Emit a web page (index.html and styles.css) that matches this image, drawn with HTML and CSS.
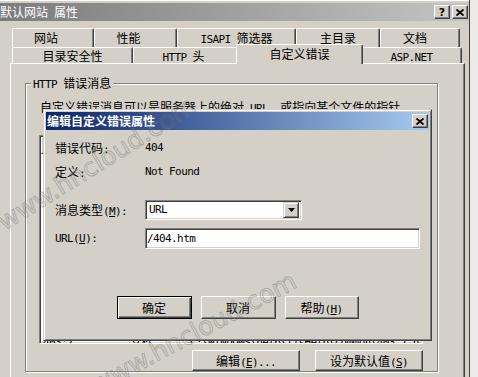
FILE: index.html
```html
<!DOCTYPE html>
<html lang="zh-CN">
    <head>
        <meta charset="UTF-8" />
        <title>默认网站 属性</title>
        <link rel="stylesheet" href="styles.css">
    </head>
    <body>
        <div class="window">
            <div class="titlebar">
                <span class="title">默认网站<span class="en"> </span>属性</span>
                <div class="caption_btns">
                    <span class="cbtn">?</span>
                    <span class="cbtn">
                        <svg width="8" height="7" viewBox="0 0 8 7"><path d="M0.5 0.5 L7.5 6.5 M7.5 0.5 L0.5 6.5" stroke="#000" stroke-width="1.8"/></svg>
                    </span>
                </div>
            </div>

            <div class="tabs">
                <div class="tab_row">
                    <div class="tab tab_site">网站</div>
                    <div class="tab tab_perf">性能</div>
                    <div class="tab tab_isapi"><span class="en">ISAPI </span>筛选器</div>
                    <div class="tab tab_home">主目录</div>
                    <div class="tab tab_docs">文档</div>
                </div>
                <div class="tab_row front">
                    <div class="tab tab_secure">目录安全性</div>
                    <div class="tab tab_headers"><span class="en">HTTP </span>头</div>
                    <div class="tab tab_errors active">自定义错误</div>
                    <div class="tab tab_aspnet"><span class="en">ASP.NET</span></div>
                </div>
            </div>

            <div class="panel">
                <fieldset class="group">
                    <legend><span class="en">HTTP </span>错误消息</legend>
                    <p class="desc">自定义错误消息可以是服务器上的绝对<span class="en"> URL, </span>或指向某个文件的指针。</p>
                    <div class="listview">
                        <div class="lv_head">
                            <span class="col_code"><span class="en">HTTP </span>错误</span>
                            <span class="col_type">类型</span>
                            <span class="col_path">内容</span>
                        </div>
                        <div class="lv_row"><span class="col_code en">400</span><span class="col_type">文件</span><span class="col_path en">C:\WINDOWS\help\iisHelp\common\400.htm</span></div>
                        <div class="lv_row"><span class="col_code en">401;1</span><span class="col_type">文件</span><span class="col_path en">C:\WINDOWS\help\iisHelp\common\401-1.htm</span></div>
                        <div class="lv_row"><span class="col_code en">401;2</span><span class="col_type">文件</span><span class="col_path en">C:\WINDOWS\help\iisHelp\common\401-2.htm</span></div>
                        <div class="lv_row"><span class="col_code en">401;3</span><span class="col_type">文件</span><span class="col_path en">C:\WINDOWS\help\iisHelp\common\401-3.htm</span></div>
                        <div class="lv_row"><span class="col_code en">401;4</span><span class="col_type">文件</span><span class="col_path en">C:\WINDOWS\help\iisHelp\common\401-4.htm</span></div>
                        <div class="lv_row"><span class="col_code en">401;5</span><span class="col_type">文件</span><span class="col_path en">C:\WINDOWS\help\iisHelp\common\401-5.htm</span></div>
                        <div class="lv_row"><span class="col_code en">401;7</span><span class="col_type">文件</span><span class="col_path en">C:\WINDOWS\help\iisHelp\common\401-1.htm</span></div>
                        <div class="lv_row"><span class="col_code en">403;1</span><span class="col_type">文件</span><span class="col_path en">C:\WINDOWS\help\iisHelp\common\403-1.htm</span></div>
                        <div class="lv_row"><span class="col_code en">403;2</span><span class="col_type">文件</span><span class="col_path en">C:\WINDOWS\help\iisHelp\common\403-2.htm</span></div>
                        <div class="lv_row"><span class="col_code en">403;3</span><span class="col_type">文件</span><span class="col_path en">C:\WINDOWS\help\iisHelp\common\403-3.htm</span></div>
                        <div class="lv_row"><span class="col_code en">403;4</span><span class="col_type">文件</span><span class="col_path en">C:\WINDOWS\help\iisHelp\common\403-4.htm</span></div>
                        <div class="lv_row"><span class="col_code en">403;5</span><span class="col_type">文件</span><span class="col_path en">C:\WINDOWS\help\iisHelp\common\403-5.htm</span></div>
                        <div class="lv_row"><span class="col_code en">403;6</span><span class="col_type">文件</span><span class="col_path en">C:\WINDOWS\help\iisHelp\common\403-6.htm</span></div>
                        <div class="lv_row"><span class="col_code en">403;7</span><span class="col_type">文件</span><span class="col_path en">C:\WINDOWS\help\iisHelp\common\403-7.htm</span></div>
                        <div class="lv_row"><span class="col_code en">403;8</span><span class="col_type">文件</span><span class="col_path en">C:\WINDOWS\help\iisHelp\common\403-8.htm</span></div>
                    </div>
                    <div class="group_btns">
                        <button>编辑<span class="en">(<u>E</u>)...</span></button>
                        <button>设为默认值<span class="en">(<u>S</u>)</span></button>
                    </div>
                </fieldset>
            </div>

            <!-- 编辑对话框 -->
            <div class="dialog">
                <div class="dlg_title">
                    <span>编辑自定义错误属性</span>
                    <span class="cbtn">
                        <svg width="8" height="7" viewBox="0 0 8 7"><path d="M0.5 0.5 L7.5 6.5 M7.5 0.5 L0.5 6.5" stroke="#000" stroke-width="1.8"/></svg>
                    </span>
                </div>
                <div class="dlg_body">
                    <div class="field f_code">
                        <span class="label">错误代码<span class="en">:</span></span>
                        <span class="en">404</span>
                    </div>
                    <div class="field f_def">
                        <span class="label">定义<span class="en">:</span></span>
                        <span class="en">Not Found</span>
                    </div>
                    <div class="field f_type">
                        <span class="label">消息类型<span class="en">(<u>M</u>):</span></span>
                        <div class="combo">
                            <span class="value en">URL</span>
                            <span class="drop">
                                <svg width="7" height="4" viewBox="0 0 7 4"><path d="M0 0 H7 L3.5 4 Z" fill="#000"/></svg>
                            </span>
                        </div>
                    </div>
                    <div class="field f_url">
                        <span class="label en">URL(<u>U</u>):</span>
                        <input class="textbox en" type="text" value="/404.htm" />
                    </div>
                    <div class="dlg_btns">
                        <button class="default">确定</button>
                        <button>取消</button>
                        <button class="help">帮助<span class="en">(<u>H</u>)</span></button>
                    </div>
                </div>
            </div>

            <div class="watermark wm_top">www.hncloud.com</div>
            <div class="watermark wm_bottom">www.hncloud.com</div>
        </div>
    </body>
</html>
```

FILE: styles.css
```css
* {
    box-sizing: border-box;
}

body {
    margin: 0;
    overflow: hidden;
    background: #eceae6;
    font-family: "Noto Sans CJK SC", sans-serif;
    font-size: 12px;
    line-height: 14px;
    color: #000;
}

/* latin text, narrow like the old bitmap font */
.en {
    font-family: "DejaVu Sans Mono", "Liberation Mono", monospace;
    font-size: 11px;
    line-height: 10px;
    letter-spacing: -0.6px;
}

.window {
    position: relative;
    width: 470px;
    height: 377px;
    overflow: hidden;
    padding-top: 3px;
    background: #d4d0c8;
    border-right: 1px solid #404040;
    box-shadow: inset 0 1px #fff;
}

.titlebar {
    display: flex;
    align-items: center;
    height: 18px;
    padding-right: 1px;
    background: linear-gradient(to right, #7c7c7c, #c4c4c4);
    color: #fff;
}

.titlebar .title {
    flex: 1;
    white-space: nowrap;
}

.caption_btns {
    display: flex;
    gap: 2px;
}

.cbtn {
    display: flex;
    align-items: center;
    justify-content: center;
    width: 16px;
    height: 14px;
    background: #d4d0c8;
    border: 1px solid;
    border-color: #fff #404040 #404040 #fff;
    box-shadow: inset -1px -1px #808080;
    color: #000;
    font: bold 11px "DejaVu Sans", sans-serif;
}

/* tabs */
.tabs {
    margin: 7px 0 0 12px;
}

.tab_row {
    display: flex;
}

.tab {
    height: 19px;
    padding-top: 2px;
    text-align: center;
    white-space: nowrap;
    background: #d4d0c8;
    border-top: 1px solid #fff;
    border-left: 1px solid #fff;
    border-right: 1px solid #404040;
    border-radius: 2px 2px 0 0;
    box-shadow: inset -1px 0 #808080;
}

.tab_row.front .tab {
    height: 16px;
    padding-top: 1px;
}

.tab_row.front .tab.active {
    position: relative;
    z-index: 1;
    height: 20px;
    margin: -3px -2px -1px;
    padding-top: 2px;
}

.tab_site { width: 82px; padding-right: 14px; }
.tab_perf { width: 83px; padding-right: 14px; }
.tab_isapi { width: 119px; }
.tab_home { width: 84px; }
.tab_docs { width: 80px; padding-right: 10px; }
.tab_secure { width: 121px; }
.tab_headers { width: 105px; padding-right: 4px; }
.tab_errors { width: 127px; }
.tab_aspnet { width: 101px; }

.panel {
    width: 455px;
    height: 330px;
    margin-left: 10px;
    padding-left: 14px;
    border-top: 1px solid #fff;
    border-left: 1px solid #fff;
    border-right: 1px solid #404040;
    box-shadow: inset -1px 0 #808080;
}

/* group box */
.group {
    width: 413px;
    min-width: 0;
    margin: 13px 0 0;
    padding: 0 14px 0 13px;
    border: 1px solid #808080;
    box-shadow: 1px 1px #fff, inset 1px 1px #fff;
}

.group legend {
    margin-left: -8px;
    padding: 0 2px;
    line-height: 12px;
    background: #d4d0c8;
}

.desc {
    height: 14px;
    margin: 10px 0 0 1px;
    white-space: nowrap;
}

.listview {
    height: 209px;
    margin-top: 21px;
    padding: 1px;
    overflow: hidden;
    background: #fff;
    border: 1px solid;
    border-color: #808080 #fff #fff #808080;
    box-shadow: inset 1px 1px #404040, inset -1px -1px #d4d0c8;
}

.lv_head {
    display: flex;
    height: 17px;
    background: #d4d0c8;
}

.lv_head span {
    padding: 1px 0 0 5px;
    border: 1px solid;
    border-color: #fff #404040 #404040 #fff;
}

.lv_row {
    display: flex;
    align-items: center;
    height: 14px;
    overflow: hidden;
    white-space: nowrap;
}

.col_code { flex: none; width: 89px; padding-left: 2px; }
.col_type { flex: none; width: 60px; }
.col_path { flex: 1; min-width: 0; }

.group_btns {
    display: flex;
    justify-content: flex-end;
    gap: 15px;
    margin-top: 6px;
}

.group_btns button {
    width: 108px;
}

button {
    height: 21px;
    padding: 0;
    font: inherit;
    color: #000;
    background: #d4d0c8;
    border: 1px solid;
    border-color: #fff #404040 #404040 #fff;
    box-shadow: inset -1px -1px #808080;
}

button.default {
    border-color: #000;
    box-shadow: inset 1px 1px #fff, inset -1px -1px #404040, inset -2px -2px #808080;
}

/* dialog on top */
.dialog {
    position: absolute;
    left: 43px;
    top: 109px;
    width: 389px;
    height: 232px;
    padding: 2px;
    background: #d4d0c8;
    border: 1px solid;
    border-color: #d4d0c8 #404040 #404040 #d4d0c8;
    box-shadow: inset 1px 1px #fff, inset -1px -1px #808080;
}

.dlg_title {
    display: flex;
    align-items: center;
    justify-content: space-between;
    height: 18px;
    padding: 0 1px;
    background: linear-gradient(to right, #0a246a, #a6caf0);
    color: #fff;
    font-weight: bold;
}

.dlg_body {
    padding: 0 9px;
}

.field {
    display: flex;
    align-items: center;
}

.field .label {
    flex: none;
    width: 90px;
    white-space: nowrap;
}

.f_code { height: 14px; margin-top: 11px; }
.f_def { height: 14px; margin-top: 10px; }
.f_type { height: 20px; margin-top: 21px; }
.f_url { height: 21px; margin-top: 8px; }

.combo {
    display: flex;
    align-items: center;
    width: 157px;
    height: 20px;
    padding: 2px;
    background: #fff;
    border: 1px solid;
    border-color: #808080 #fff #fff #808080;
    box-shadow: inset 1px 1px #404040, inset -1px -1px #d4d0c8;
}

.combo .value {
    flex: 1;
    padding-left: 1px;
}

.combo .drop {
    display: flex;
    align-items: center;
    justify-content: center;
    width: 16px;
    height: 16px;
    background: #d4d0c8;
    border: 1px solid;
    border-color: #d4d0c8 #404040 #404040 #d4d0c8;
    box-shadow: inset 1px 1px #fff, inset -1px -1px #808080;
}

.textbox {
    width: 275px;
    height: 21px;
    padding: 0 0 0 1px;
    margin: 0;
    color: #000;
    background: #fff;
    border: 1px solid;
    border-color: #808080 #fff #fff #808080;
    box-shadow: inset 1px 1px #404040, inset -1px -1px #d4d0c8;
    outline: none;
}

.dlg_btns {
    display: flex;
    justify-content: center;
    gap: 9px;
    margin-top: 47px;
}

.dlg_btns button {
    width: 75px;
    height: 23px;
}

.dlg_btns .help {
    width: 74px;
}

/* site watermark */
.watermark {
    position: absolute;
    z-index: 5;
    white-space: nowrap;
    font-family: "DejaVu Sans", sans-serif;
    font-size: 25px;
    line-height: 30px;
    color: transparent;
    -webkit-text-stroke: 1px rgba(120, 120, 120, 0.45);
    pointer-events: none;
}

.wm_top {
    left: -17px;
    top: 149px;
    transform: rotate(-32deg);
}

.wm_bottom {
    left: 80px;
    top: 318px;
    transform: rotate(-28deg);
}
```
